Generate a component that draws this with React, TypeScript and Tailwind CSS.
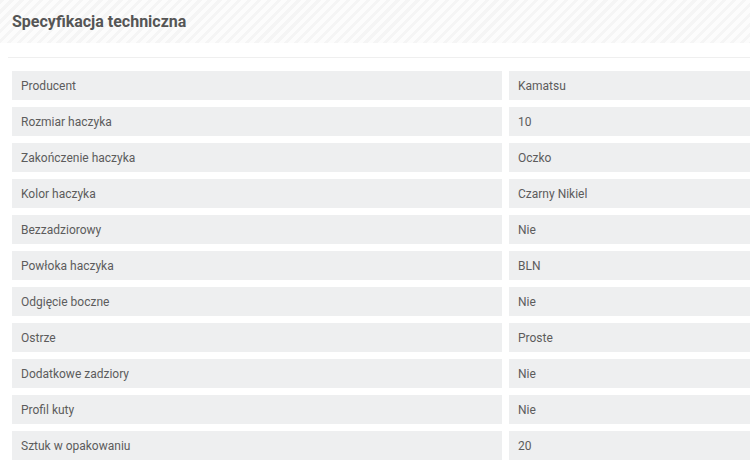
const specs: [string, string][] = [
  ["Producent", "Kamatsu"],
  ["Rozmiar haczyka", "10"],
  ["Zakończenie haczyka", "Oczko"],
  ["Kolor haczyka", "Czarny Nikiel"],
  ["Bezzadziorowy", "Nie"],
  ["Powłoka haczyka", "BLN"],
  ["Odgięcie boczne", "Nie"],
  ["Ostrze", "Proste"],
  ["Dodatkowe zadziory", "Nie"],
  ["Profil kuty", "Nie"],
  ["Sztuk w opakowaniu", "20"],
]

export default function App() {
  return (
    <div className="h-[470px] w-[750px] overflow-hidden bg-white font-['Roboto',sans-serif] text-[#5c5c5c]">
      <div className="flex h-[43px] items-center bg-[repeating-linear-gradient(135deg,#f5f5f5_0px,#f5f5f5_3px,#fcfcfc_3px,#fcfcfc_7px)] px-3">
        <h2 className="text-[16px] font-bold text-[#555]">Specyfikacja techniczna</h2>
      </div>
      <div className="ml-2 mt-[14px] border-t border-[#efefef] pl-1 pt-[13px]">
        <div className="grid grid-cols-[490px_1fr] gap-x-[7px] gap-y-[7px]">
          {specs.map(([label, value]) => (
            <div key={label} className="contents">
              <div className="flex h-[29px] items-center bg-[#eeeff0] px-[9px] text-[12px]">{label}</div>
              <div className="flex h-[29px] items-center bg-[#eeeff0] px-[9px] text-[12px]">{value}</div>
            </div>
          ))}
        </div>
      </div>
    </div>
  )
}
